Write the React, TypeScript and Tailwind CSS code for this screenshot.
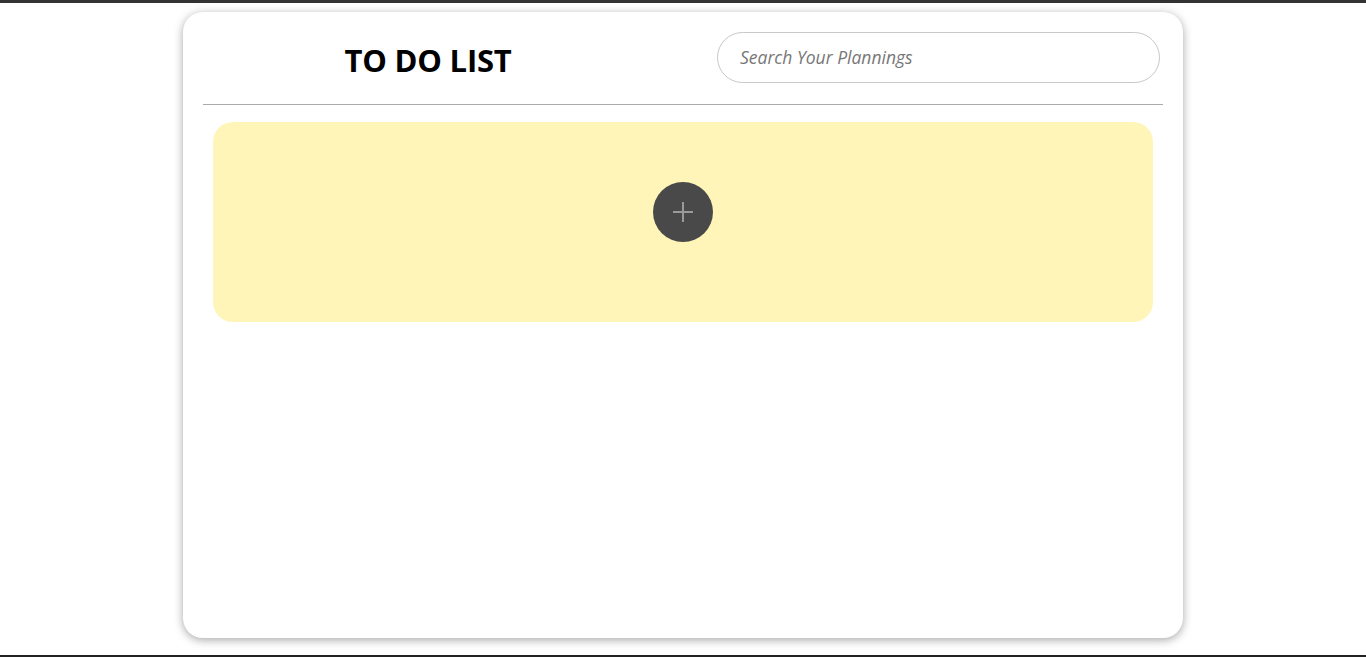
import { useState } from 'react';

export default function App() {
  const [query, setQuery] = useState('');

  return (
    <div className="w-[1366px] h-[657px] bg-white flex flex-col overflow-hidden font-['Open_Sans',sans-serif]">
      <div className="h-[3px] bg-[#333]" />
      <div className="flex-1 flex justify-center pt-[9px]">
        <div className="w-[1000px] h-[626px] bg-white rounded-[20px] shadow-[0_2px_10px_rgba(0,0,0,0.35)] px-5 pt-5 flex flex-col">
          <div className="flex items-center h-[51px]">
            <div className="w-[450px] flex justify-center pt-[5px]">
              <h1 className="text-[31px] font-bold text-black tracking-[-0.2px]">TO DO LIST</h1>
            </div>
            <input
              className="ml-auto mr-[3px] w-[443px] h-[51px] rounded-full border border-[#c8c8c8] px-[22px] pb-[2px] text-[17.5px] italic text-[#444] placeholder:text-[#777] outline-none"
              onChange={(e) => setQuery(e.target.value)}
              placeholder="Search Your Plannings"
              value={query}
            />
          </div>
          <div className="mt-[21px] h-px bg-[#aaa]" />
          <div className="px-[10px] pt-[17px]">
            <div className="h-[200px] rounded-[20px] bg-[#fff5b9] flex justify-center pt-[60px]">
              <button
                className="w-[60px] h-[60px] rounded-full bg-[#494949] flex items-center justify-center"
                type="button"
              >
                <svg width="22" height="22" viewBox="0 0 22 22">
                  <path d="M11 1v20M1 11h20" stroke="#9a9a9a" strokeWidth="2" />
                </svg>
              </button>
            </div>
          </div>
        </div>
      </div>
      <div className="h-[2px] bg-[#222]" />
    </div>
  );
}
